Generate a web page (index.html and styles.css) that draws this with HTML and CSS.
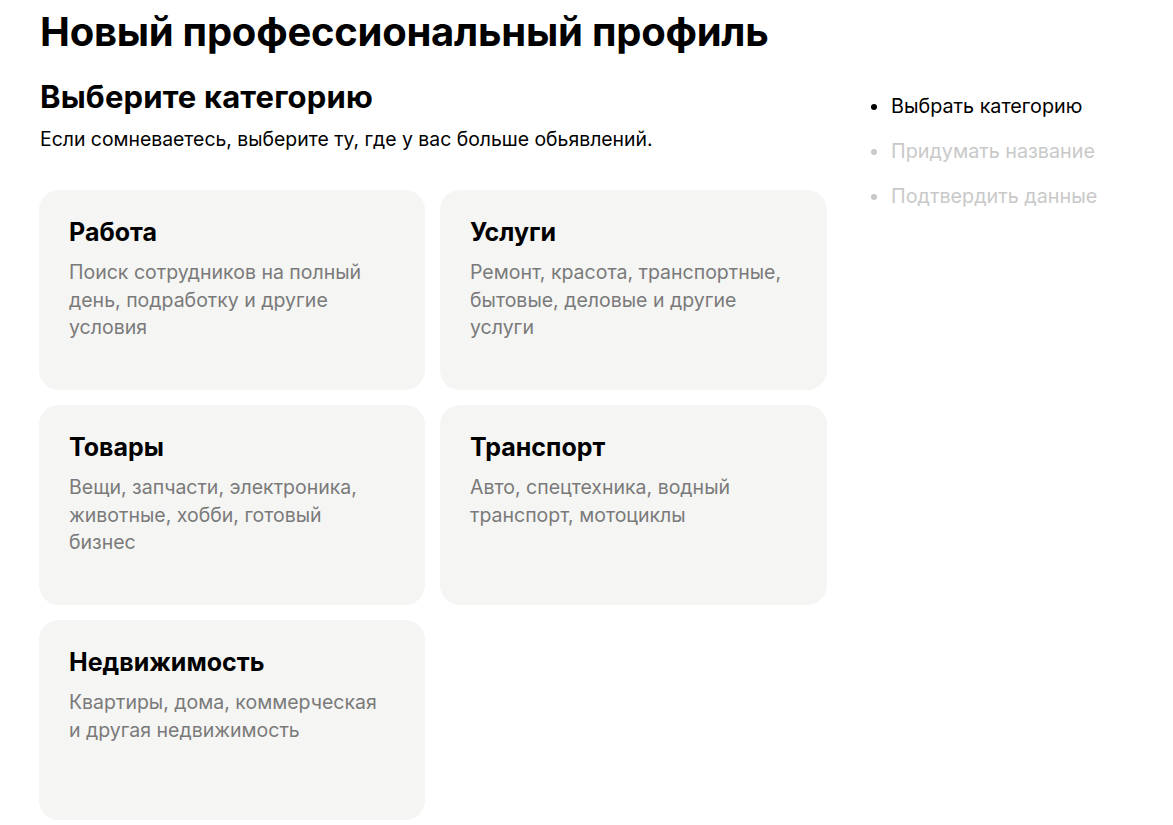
FILE: index.html
```html
<!DOCTYPE html>
<html lang="ru">
<head>
<meta charset="utf-8">
<title>Новый профессиональный профиль</title>
<link rel="stylesheet" href="styles.css">
</head>
<body>
<div class="page">
  <main class="main">
    <h1 class="title">Новый профессиональный профиль</h1>
    <h2 class="subtitle">Выберите категорию</h2>
    <p class="lead">Если сомневаетесь, выберите ту, где у вас больше обьявлений.</p>
    <div class="grid">
      <div class="card">
        <div class="card-title">Работа</div>
        <div class="card-text">Поиск сотрудников на полный день, подработку и другие условия</div>
      </div>
      <div class="card">
        <div class="card-title">Услуги</div>
        <div class="card-text">Ремонт, красота, транспортные, бытовые, деловые и другие услуги</div>
      </div>
      <div class="card">
        <div class="card-title">Товары</div>
        <div class="card-text">Вещи, запчасти, электроника, животные, хобби, готовый бизнес</div>
      </div>
      <div class="card">
        <div class="card-title">Транспорт</div>
        <div class="card-text">Авто, спецтехника, водный транспорт, мотоциклы</div>
      </div>
      <div class="card">
        <div class="card-title">Недвижимость</div>
        <div class="card-text">Квартиры, дома, коммерческая и другая недвижимость</div>
      </div>
    </div>
  </main>
  <aside class="steps">
    <ul class="step-list">
      <li class="step step-active">Выбрать категорию</li>
      <li class="step">Придумать название</li>
      <li class="step">Подтвердить данные</li>
    </ul>
  </aside>
</div>
</body>
</html>
```

FILE: styles.css
```css
* { box-sizing: border-box; }
html, body { margin: 0; padding: 0; background: #fff; }
body {
  font-family: Inter, "Noto Sans", sans-serif;
  color: #000;
}
.page {
  display: flex;
  padding: 8px 0 0 39px;
}
.main {
  width: 788px;
  flex-shrink: 0;
}
.title {
  margin: 0 0 0 1px;
  font-size: 40px;
  line-height: 48px;
  font-weight: 700;
  letter-spacing: -0.25px;
}
.subtitle {
  margin: 23px 0 0 1px;
  font-size: 31px;
  line-height: 36px;
  font-weight: 700;
  letter-spacing: 0.15px;
}
.lead {
  margin: 11px 0 0 1px;
  font-size: 19.4px;
  line-height: 27px;
}
.grid {
  margin-top: 37px;
  display: grid;
  grid-template-columns: 386px 387px;
  grid-auto-rows: 200px;
  gap: 15px;
}
.card {
  background: #f5f5f4;
  border-radius: 20px;
  padding: 26px 42px 26px 30px;
}
.card-title {
  font-size: 25px;
  line-height: 32px;
  font-weight: 700;
}
.card-text {
  margin-top: 11px;
  font-size: 19.5px;
  line-height: 27.5px;
  color: #7a7a7a;
}
.steps {
  margin-left: 41px;
  padding-top: 85px;
}
.step-list {
  list-style: none;
  margin: 0;
  padding: 0;
}
.step {
  display: flex;
  align-items: center;
  gap: 14px;
  font-size: 19.75px;
  line-height: 27px;
  color: #c9c9c9;
  margin-bottom: 18px;
}
.step::before {
  content: "";
  flex-shrink: 0;
  width: 6px;
  height: 6px;
  border-radius: 50%;
  background: #c9c9c9;
  margin-left: 3px;
}
.step-active { color: #000; }
.step-active::before { background: #000; }
```
